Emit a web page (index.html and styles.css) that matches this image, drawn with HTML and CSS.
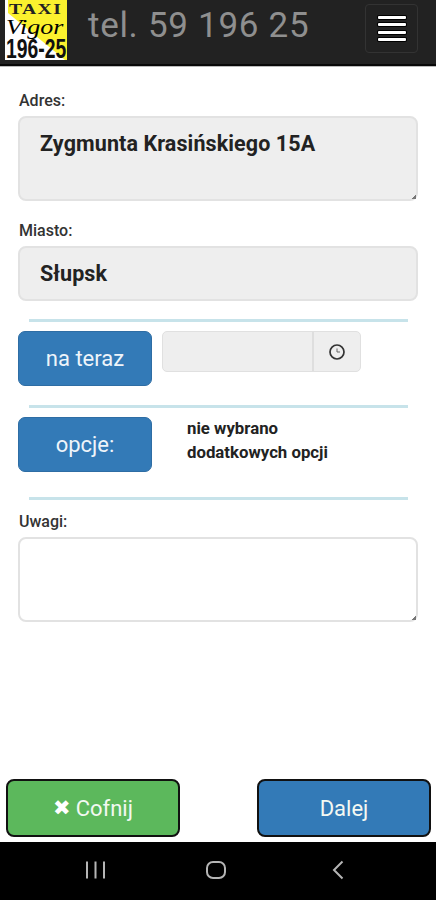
FILE: index.html
```html
<!DOCTYPE html>
<html lang="pl">
<head>
<meta charset="utf-8">
<title>Taxi Vigor</title>
<link rel="stylesheet" href="styles.css">
</head>
<body>
<div class="app">
  <header class="topbar">
    <div class="logo">
      <svg class="logo-bg" width="62" height="60" viewBox="0 0 62 60"><rect width="62" height="60" fill="#fff"/><polygon points="3,0 62,0 62,60 60,60 3,13" fill="#fbf12e"/></svg>
      <span class="logo-taxi">TAXI</span>
      <span class="logo-vigor">Vigor</span>
      <span class="logo-num">196-25</span>
    </div>
    <div class="phone">tel. 59 196 25</div>
    <div class="menu"><span></span><span></span><span></span><span></span></div>
  </header>
  <main class="form">
    <label class="label">Adres:</label>
    <div class="field field-tall">Zygmunta Krasińskiego 15A<i class="grip"></i></div>
    <label class="label label-city">Miasto:</label>
    <div class="field field-short">Słupsk</div>
    <div class="rule rule-a"></div>
    <div class="row row-time">
      <div class="btn btn-side">na teraz</div>
      <div class="time">
        <div class="time-input"></div>
        <div class="time-addon">
          <svg width="18" height="18" viewBox="0 0 18 18"><circle cx="9" cy="9" r="7" fill="none" stroke="#333" stroke-width="1.7"/><path d="M9 5.500V9H12" fill="none" stroke="#666" stroke-width="1"/></svg>
        </div>
      </div>
    </div>
    <div class="rule rule-b"></div>
    <div class="row row-opt">
      <div class="btn btn-side">opcje:</div>
      <div class="opt-text">nie wybrano<br>dodatkowych opcji</div>
    </div>
    <div class="rule rule-c"></div>
    <label class="label label-notes">Uwagi:</label>
    <div class="notes"><i class="grip"></i></div>
  </main>
  <div class="actions">
    <div class="action action-back"><span class="x">✖</span> Cofnij</div>
    <div class="action action-next">Dalej</div>
  </div>
  <nav class="sysnav">
    <svg class="nav-ic" width="22" height="20" viewBox="0 0 22 20"><path d="M3 1.500v17M11.500 1.500v17M20 1.500v17" stroke="#b5b5b5" stroke-width="2" fill="none"/></svg>
    <svg class="nav-ic" width="22" height="20" viewBox="0 0 22 20"><rect x="2" y="2" width="18" height="16" rx="6" stroke="#b5b5b5" stroke-width="2" fill="none"/></svg>
    <svg class="nav-ic" width="14" height="20" viewBox="0 0 14 20"><path d="M11.500 1.500 3 10l8.500 8.500" stroke="#b5b5b5" stroke-width="2" fill="none"/></svg>
  </nav>
</div>
</body>
</html>
```
FILE: styles.css
```css
* { box-sizing: border-box; }
html, body { margin: 0; padding: 0; background: #fff; }
body { font-family: Roboto, "Liberation Sans", sans-serif; color: #222; }
.app { width: 436px; height: 900px; display: flex; flex-direction: column; overflow: hidden; }

.topbar { height: 66px; flex: none; background: #222; border-bottom: 2px solid #080808; display: flex; align-items: flex-start; position: relative; box-shadow: 0 1px 0 #bbb; }
.logo { width: 62px; height: 60px; margin-left: 5px; position: relative; flex: none; }
.logo-bg { position: absolute; left: 0; top: 0; }
.logo-taxi { position: absolute; left: 4px; top: 3px; font: bold 14px/14px "Liberation Serif", serif; letter-spacing: 1px; color: #222; transform-origin: left top; transform: scaleX(1.4); }
.logo-vigor { position: absolute; left: 1px; top: 17px; font: italic 20px/20px "Liberation Serif", serif; color: #000; transform-origin: left top; transform: scaleX(1.3); }
.logo-num { position: absolute; left: 1px; top: 38px; font: bold 28px/22px "Liberation Sans", sans-serif; color: #111; transform-origin: left top; transform: scaleX(0.69); white-space: nowrap; }
.phone { margin-left: 21px; margin-top: 6px; font-size: 35px; line-height: 40px; color: #8f8f8f; letter-spacing: 0.7px; white-space: nowrap; }
.menu { position: absolute; left: 365px; top: 4px; width: 53px; height: 49px; border: 1px solid #333; border-radius: 4px; display: flex; flex-direction: column; align-items: center; justify-content: center; gap: 4.500px; }
.menu span { display: block; width: 28px; height: 3px; background: #fff; border-radius: 1px; box-shadow: 0 0 0 1px #000; }

.form { flex: 1; padding: 25px 18px 0; display: flex; flex-direction: column; }
.label { font-size: 16px; line-height: 20px; font-weight: 500; color: #333; height: 20px; padding-left: 1px; }
.field { width: 400px; background: #eee; border: 2px solid #e2e2e2; border-radius: 8px; font-size: 21.500px; font-weight: 700; letter-spacing: 0.1px; color: #222; padding: 0 20px; position: relative; }
.field-tall { height: 85px; margin-top: 5px; padding-top: 12px; line-height: 27px; }
.field-short { height: 55px; margin-top: 5px; line-height: 51px; }
.label-city { margin-top: 20px; }
.rule { height: 3px; width: 379px; margin-left: 11px; background: #c7e3ea; flex: none; }
.rule-a { margin-top: 18px; }
.row { display: flex; }
.row-time { margin-top: 9px; align-items: flex-start; }
.btn { width: 134px; height: 55px; border-radius: 7px; background: #337ab7; border: 1px solid #2e6da4; color: #eef4fa; font-size: 22px; display: flex; align-items: center; justify-content: center; flex: none; }
.time { margin-left: 10px; display: flex; width: 199px; height: 41px; background: #eee; border: 1px solid #e0e0e0; border-radius: 5px; }
.time-input { width: 151px; border-right: 2px solid #dedede; }
.time-addon { flex: 1; display: flex; align-items: center; justify-content: center; }
.rule-b { margin-top: 19px; }
.row-opt { margin-top: 9px; }
.opt-text { margin-left: 35px; margin-top: -1px; font-size: 16.800px; line-height: 24px; font-weight: 700; color: #222; }
.rule-c { margin-top: 25px; }
.label-notes { margin-top: 12px; }
.notes { width: 400px; height: 85px; margin-top: 5px; border: 2px solid #e2e2e2; border-radius: 8px; position: relative; background: #fff; }
.grip { position: absolute; right: 0; bottom: 0; width: 5px; height: 5px; background: linear-gradient(135deg, transparent 60%, #777 60%); }

.actions { height: 63px; flex: none; padding: 0 5px 0 6px; display: flex; justify-content: space-between; align-items: flex-start; }
.action { width: 174px; height: 58px; border: 2px solid #111; border-radius: 8px; color: #f3f8f2; font-size: 22px; display: flex; align-items: center; justify-content: center; gap: 5px; }
.action-back { background: #5cb85c; }
.action-next { background: #337ab7; }
.x { font-size: 21px; font-family: "DejaVu Sans", sans-serif; color: #fff; }

.sysnav { height: 58px; flex: none; background: #000; display: flex; align-items: center; padding-left: 84px; padding-bottom: 3px; }
.nav-ic:nth-child(2) { margin-left: 99px; }
.nav-ic:nth-child(3) { margin-left: 104px; }
```
